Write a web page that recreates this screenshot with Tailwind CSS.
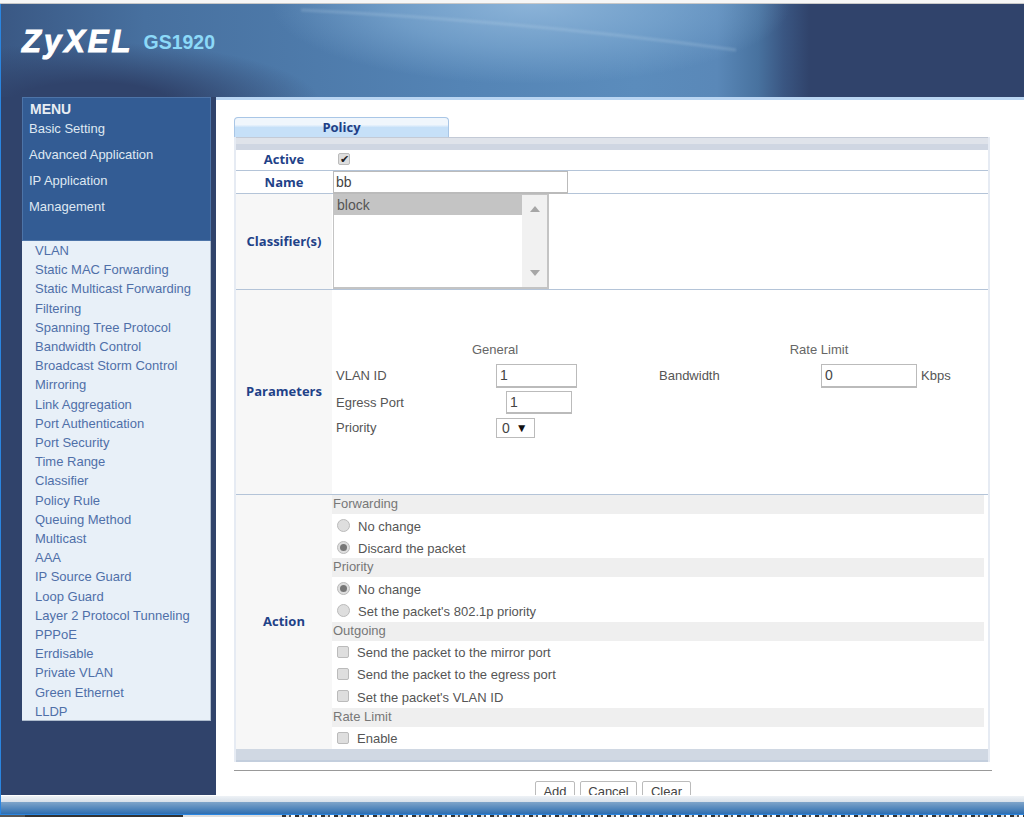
<!DOCTYPE html>
<html lang="en">
<head>
    <meta charset="UTF-8">
    <title>GS1920</title>
    <script src="https://cdn.jsdelivr.net/npm/@tailwindcss/browser@4"></script>
</head>
<body class="bg-white font-['Liberation_Sans',Arial,sans-serif] text-[#555]">
<div class="h-[817px] w-[1024px] overflow-hidden flex flex-col">

    <!-- top strip -->
    <div class="h-[4px] shrink-0 bg-[#f6f6f6] border-b border-[#c8c8c8]"></div>

    <div class="flex-1 min-h-0 flex flex-col border-l border-[#2a85e0]">
        <!-- header -->
        <div class="h-[93px] shrink-0 relative overflow-hidden flex items-start pl-[21px] pt-[21px] gap-[10px] bg-[radial-gradient(ellipse_230px_62px_at_90px_100px,#30436b_0%,#30436b_35%,rgba(48,67,107,0)_100%),radial-gradient(ellipse_260px_80px_at_530px_0px,#8bb3d8_0%,rgba(123,167,208,0.7)_55%,rgba(123,167,208,0)_100%),linear-gradient(90deg,#3a5884_0%,#47709f_14%,#5484b5_45%,#5b8cbc_62%,#5a88b8_70%,#48729f_74%,#3a5682_76.5%,#30436b_79%,#30436b_100%)]">
            <svg class="absolute left-0 top-0 blur-[1px]" width="1024" height="93" viewBox="0 0 1024 93" fill="none">
                <path d="M300 6 C 420 12 560 22 735 46" stroke="#cfe2f2" stroke-opacity="0.2" stroke-width="3"/>
            </svg>
            <span class="relative text-white font-bold italic text-[31px] leading-[34px] tracking-[3px] [-webkit-text-stroke:1px_white]">ZyXEL</span>
            <span class="relative text-[#8cd9f8] font-bold text-[19.5px] leading-[22px] mt-[6px]">GS1920</span>
        </div>

        <div class="flex-1 flex min-h-0">
            <!-- sidebar -->
            <div class="w-[215px] shrink-0 bg-[#30436b] pl-[21px] pr-[5px]">
                <div class="h-[144px] bg-[#335c94] border border-[#4d74a8] pl-[6px] text-[#dfe8f2] text-[13px]">
                    <div class="font-bold text-[14px] leading-[16px] text-[#e8edf3] pl-[1px] pt-[3px]">MENU</div>
                    <div class="leading-[26px] -mt-[1px]">
                        <div>Basic Setting</div>
                        <div>Advanced Application</div>
                        <div>IP Application</div>
                        <div>Management</div>
                    </div>
                </div>
                <div class="h-[480px] bg-[#e8f0f8] border-r border-b border-[#aebccd] pl-[13px] text-[13px] leading-[19.2px] text-[#4f6fa8]">
                    <div>VLAN</div>
                    <div>Static MAC Forwarding</div>
                    <div>Static Multicast Forwarding</div>
                    <div>Filtering</div>
                    <div>Spanning Tree Protocol</div>
                    <div>Bandwidth Control</div>
                    <div>Broadcast Storm Control</div>
                    <div>Mirroring</div>
                    <div>Link Aggregation</div>
                    <div>Port Authentication</div>
                    <div>Port Security</div>
                    <div>Time Range</div>
                    <div>Classifier</div>
                    <div>Policy Rule</div>
                    <div>Queuing Method</div>
                    <div>Multicast</div>
                    <div>AAA</div>
                    <div>IP Source Guard</div>
                    <div>Loop Guard</div>
                    <div>Layer 2 Protocol Tunneling</div>
                    <div>PPPoE</div>
                    <div>Errdisable</div>
                    <div>Private VLAN</div>
                    <div>Green Ethernet</div>
                    <div>LLDP</div>
                </div>
            </div>

            <!-- main -->
            <div class="flex-1 min-w-0 bg-white border-t-[3px] border-[#b9d5f2] overflow-hidden pl-[18px] pt-[17px]">
                <div class="w-[215px] h-[20px] rounded-t-[4px] border border-b-0 border-[#a9c6e6] bg-[linear-gradient(#f0f6fc_0%,#f0f6fc_35%,#c6e0f8_50%,#c6e0f8_100%)] text-center font-bold font-['Open_Sans',sans-serif] text-[13px] leading-[19px] text-[#1f3f86]">Policy</div>

                <div class="w-[756px] border-r-2 border-l-2 border-[#e6ebf3]">
                    <div class="h-[13px] bg-[linear-gradient(#dfe3ea_0%,#dfe3ea_50%,#cfd6e2_50%,#cfd6e2_100%)] border-t border-[#c3cad6]"></div>

                    <div class="flex h-[21px] border-b border-[#b4c4d8]">
                        <div class="w-[96px] shrink-0 text-center font-bold font-['Open_Sans',sans-serif] text-[13px] leading-[19px] text-[#1f4288]">Active</div>
                        <div class="flex-1 pl-[6px] pt-[3px]">
                            <div class="w-[12px] h-[12px] rounded-[2px] bg-[#dedede] border border-[#bbb] flex items-center justify-center text-[#222] text-[11px] leading-none">✔</div>
                        </div>
                    </div>

                    <div class="flex h-[23px] border-b border-[#b4c4d8]">
                        <div class="w-[96px] shrink-0 text-center font-bold font-['Open_Sans',sans-serif] text-[13px] leading-[22px] text-[#1f4288]">Name</div>
                        <div class="ml-[1px] w-[235px] h-[23px] bg-white border border-[#bbb] border-b-2 pl-[2px] text-[14px] leading-[21px] text-[#444]">bb</div>
                    </div>

                    <div class="flex h-[96px] border-b border-[#b4c4d8]">
                        <div class="w-[96px] shrink-0 bg-[#f7f7f7] flex items-center justify-center font-bold font-['Open_Sans',sans-serif] text-[13px] text-[#1f4288]">Classifier(s)</div>
                        <div class="ml-[1px] w-[216px] h-[95px] border-r-2 border-b-2 border-l border-t border-[#c4c4c4] flex">
                            <div class="flex-1 min-w-0">
                                <div class="h-[20px] bg-[#c4c4c4] pl-[3px] text-[14px] leading-[20px] text-[#555]">block</div>
                            </div>
                            <div class="w-[25px] shrink-0 bg-[#f1f1f1] flex flex-col justify-between items-center py-[11px]">
                                <div class="w-0 h-0 border-l-[5px] border-r-[5px] border-b-[6px] border-l-transparent border-r-transparent border-b-[#a6a6a6]"></div>
                                <div class="w-0 h-0 border-l-[5px] border-r-[5px] border-t-[6px] border-l-transparent border-r-transparent border-t-[#a6a6a6]"></div>
                            </div>
                        </div>
                    </div>

                    <div class="flex h-[205px] border-b border-[#b4c4d8]">
                        <div class="w-[96px] shrink-0 bg-[#f7f7f7] flex items-center justify-center font-bold font-['Open_Sans',sans-serif] text-[13px] text-[#1f4288]">Parameters</div>
                        <div class="flex-1 pt-[52px] text-[13px] text-[#555]">
                            <div class="flex h-[16px] leading-[16px] text-[#666]">
                                <div class="w-[326px] text-center">General</div>
                                <div class="w-[322px] text-center">Rate Limit</div>
                            </div>
                            <div class="flex h-[24px] mt-[6px] items-center">
                                <div class="w-[164px] pl-[4px]">VLAN ID</div>
                                <div class="w-[81px] h-[24px] border border-[#bbb] border-b-2 pl-[3px] text-[14px] leading-[21px] text-[#444]">1</div>
                                <div class="ml-[82px] w-[162px]">Bandwidth</div>
                                <div class="w-[96px] h-[24px] border border-[#bbb] border-b-2 pl-[3px] text-[14px] leading-[21px] text-[#444]">0</div>
                                <div class="ml-[4px]">Kbps</div>
                            </div>
                            <div class="flex h-[23px] mt-[3px] items-center">
                                <div class="w-[174px] pl-[4px]">Egress Port</div>
                                <div class="w-[66px] h-[23px] border border-[#bbb] border-b-2 pl-[3px] text-[14px] leading-[20px] text-[#444]">1</div>
                            </div>
                            <div class="flex h-[20px] mt-[4px] items-center">
                                <div class="w-[164px] pl-[4px]">Priority</div>
                                <div class="w-[39px] h-[20px] border border-[#bbb] pl-[5px] text-[14px] leading-[18px] text-[#444] flex items-center gap-[6px]">
                                    <span>0</span><span class="text-[#111] text-[12px]">▼</span>
                                </div>
                            </div>
                        </div>
                    </div>

                    <div class="flex h-[254px]">
                        <div class="w-[96px] shrink-0 bg-[#f7f7f7] flex items-center justify-center font-bold font-['Open_Sans',sans-serif] text-[13px] text-[#1f4288]">Action</div>
                        <div class="flex-1 pr-[4px] text-[13px] text-[#555]">
                            <div class="h-[19px] bg-[#efefef] pl-[1px] leading-[18px] text-[#777]">Forwarding</div>
                            <div class="h-[22px] pt-[3px] flex items-center gap-[8px] pl-[5px]">
                                <div class="w-[13px] h-[13px] rounded-full bg-[#dedede] border border-[#bbb] -mt-[3px]"></div><span>No change</span>
                            </div>
                            <div class="h-[22px] pt-[3px] flex items-center gap-[8px] pl-[5px]">
                                <div class="w-[13px] h-[13px] rounded-full bg-[#dedede] border border-[#bbb] -mt-[3px] flex items-center justify-center"><div class="w-[7px] h-[7px] rounded-full bg-[#777]"></div></div><span>Discard the packet</span>
                            </div>
                            <div class="h-[19px] bg-[#efefef] pl-[1px] leading-[18px] text-[#777]">Priority</div>
                            <div class="h-[22px] pt-[3px] flex items-center gap-[8px] pl-[5px]">
                                <div class="w-[13px] h-[13px] rounded-full bg-[#dedede] border border-[#bbb] -mt-[3px] flex items-center justify-center"><div class="w-[7px] h-[7px] rounded-full bg-[#777]"></div></div><span>No change</span>
                            </div>
                            <div class="h-[23px] pt-[3px] flex items-center gap-[8px] pl-[5px]">
                                <div class="w-[13px] h-[13px] rounded-full bg-[#dedede] border border-[#bbb] -mt-[3px]"></div><span>Set the packet's 802.1p priority</span>
                            </div>
                            <div class="h-[19px] bg-[#efefef] pl-[1px] leading-[18px] text-[#777]">Outgoing</div>
                            <div class="h-[22px] pt-[2px] flex items-center gap-[8px] pl-[5px]">
                                <div class="w-[12px] h-[12px] rounded-[2px] bg-[#dedede] border border-[#bbb] -mt-[3px]"></div><span>Send the packet to the mirror port</span>
                            </div>
                            <div class="h-[22px] pt-[2px] flex items-center gap-[8px] pl-[5px]">
                                <div class="w-[12px] h-[12px] rounded-[2px] bg-[#dedede] border border-[#bbb] -mt-[3px]"></div><span>Send the packet to the egress port</span>
                            </div>
                            <div class="h-[23px] pt-[2px] flex items-center gap-[8px] pl-[5px]">
                                <div class="w-[12px] h-[12px] rounded-[2px] bg-[#dedede] border border-[#bbb] -mt-[3px]"></div><span>Set the packet's VLAN ID</span>
                            </div>
                            <div class="h-[19px] bg-[#efefef] pl-[1px] leading-[18px] text-[#777]">Rate Limit</div>
                            <div class="h-[22px] pt-[2px] flex items-center gap-[8px] pl-[5px]">
                                <div class="w-[12px] h-[12px] rounded-[2px] bg-[#dedede] border border-[#bbb] -mt-[3px]"></div><span>Enable</span>
                            </div>
                        </div>
                    </div>

                    <div class="h-[13px] bg-[#d0d8e3] border-b-2 border-[#c3cedd]"></div>
                </div>

                <div class="w-[758px] mt-[8px] border-t border-[#999]"></div>
                <div class="flex gap-[5px] mt-[10px] ml-[301px] text-[13px] text-[#444]">
                    <div class="w-[40px] h-[24px] text-center border border-[#bbb] rounded-[2px] leading-[19px]">Add</div>
                    <div class="w-[57px] h-[24px] text-center border border-[#bbb] rounded-[2px] leading-[19px]">Cancel</div>
                    <div class="w-[49px] h-[24px] text-center border border-[#bbb] rounded-[2px] leading-[19px]">Clear</div>
                </div>
            </div>
        </div>

        <!-- window bar at the bottom -->
        <div class="h-[20px] shrink-0 bg-[linear-gradient(#eef2f6_0%,#d8e0e9_33%,#7da3c9_35%,#2e6eb0_100%)] border-t border-white border-b border-b-[#2a85e0]"></div>
    </div>

    <!-- next window peeking out below -->
    <div class="h-[2px] shrink-0 flex">
        <div class="w-[25px] bg-[#555]"></div>
        <div class="w-[158px] bg-[#333]"></div>
        <div class="w-[99px] bg-[#ddd]"></div>
        <div class="flex-1 bg-[repeating-linear-gradient(90deg,#333_0px,#333_4px,#ddd_4px,#ddd_7px,#555_7px,#555_9px,#fff_9px,#fff_13px)]"></div>
    </div>
</div>
</body>
</html>
